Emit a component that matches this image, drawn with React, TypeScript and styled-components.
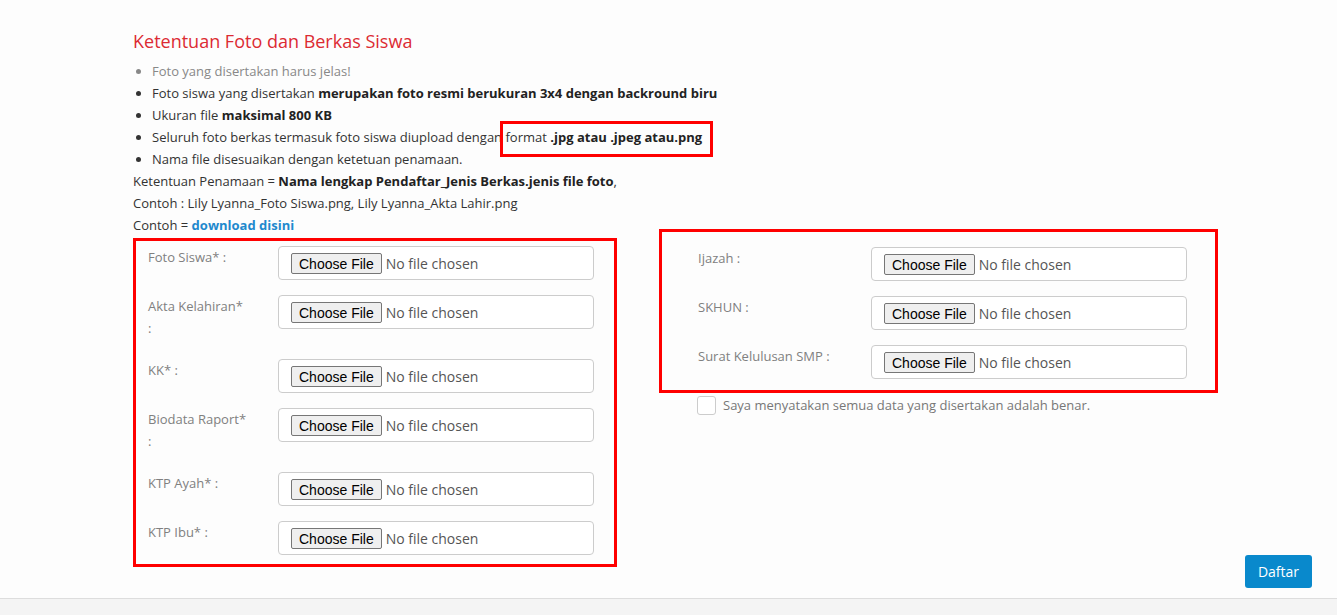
import React from "react";
import styled, { createGlobalStyle } from "styled-components";

const Global = createGlobalStyle`
  html, body { margin: 0; padding: 0; background: #fdfdfd; }
  body { font-family: "Open Sans", "Noto Sans", sans-serif; font-size: 13px; color: #333; }
  * { box-sizing: border-box; }
`;

const Page = styled.div`
  min-height: 598px;
  padding: 30px 25px 10px 133px;
`;

const Title = styled.h3`
  margin: 0 0 8px;
  font-size: 18px;
  font-weight: 400;
  line-height: 22px;
  color: #dc2b33;
`;

const List = styled.ul`
  margin: 0;
  padding-left: 19px;
  line-height: 22px;
`;

const Item = styled.li<{ $muted?: boolean }>`
  color: ${(p) => (p.$muted ? "#888" : "#333")};
  b { color: #222; font-weight: 700; }
`;

const Line = styled.p`
  margin: 0;
  line-height: 22px;
  b { color: #222; font-weight: 700; }
`;

const Link = styled.a`
  color: #1f89cd;
  font-weight: 700;
  text-decoration: none;
`;

const Marked = styled.span`
  position: relative;
  display: inline-block;
  &::after {
    content: "";
    position: absolute;
    left: -5px;
    right: -11px;
    top: -5px;
    bottom: -9px;
    border: 3px solid #ff0000;
  }
`;

const Columns = styled.div`
  display: flex;
  align-items: flex-start;
  gap: 42px;
  margin-top: -7px;
`;

const AnnotBox = styled.div<{ $w: number; $pad: string }>`
  width: ${(p) => p.$w}px;
  border: 3px solid #ff0000;
  padding: ${(p) => p.$pad};
`;

const LeftCol = styled.div`
  margin-top: 9px;
`;

const RightCol = styled.div`
  display: flex;
  flex-direction: column;
  width: 653px;
`;

const Group = styled.div<{ $label: number }>`
  display: grid;
  grid-template-columns: ${(p) => p.$label}px 316px;
  align-items: start;
  column-gap: 30px;
  margin-bottom: 15px;
  &:last-child { margin-bottom: 0; }
`;

const Label = styled.label`
  display: block;
  margin-bottom: 5px;
  line-height: 22px;
  color: #808080;
  font-size: 13px;
`;

const FileInput = styled.input`
  display: block;
  width: 316px;
  height: 34px;
  padding: 6px 12px;
  border: 1px solid #ccc;
  border-radius: 4px;
  background: #fff;
  font-family: "Open Sans", sans-serif;
  font-size: 14px;
  color: #555;
  line-height: 20px;
  &::file-selector-button {
    font-family: "Liberation Sans", Arial, sans-serif;
    font-size: 14px;
    color: #000;
    height: 21px;
    padding: 1px 7px;
    margin-right: 4px;
    border: 1px solid #767676;
    border-radius: 2px;
    background: #efefef;
  }
`;

const CheckRow = styled.label`
  display: flex;
  align-items: center;
  gap: 7px;
  margin: 2px 0 0 38px;
  color: #777;
  font-size: 13px;
  line-height: 20px;
`;

const Check = styled.input`
  appearance: none;
  margin: 0;
  width: 19px;
  height: 19px;
  border: 1px solid #ccc;
  border-radius: 3px;
  background: #fff;
`;

const Submit = styled.button`
  align-self: flex-end;
  margin-top: 140px;
  width: 67px;
  height: 33px;
  border: none;
  border-radius: 3px;
  background: #0989cc;
  color: #fff;
  font-family: "Open Sans", sans-serif;
  font-size: 14px;
`;

const Footer = styled.div`
  height: 30px;
  border-top: 1px solid #ddd;
  background: #f4f4f4;
`;

type Field = { label: string };
const leftFields: Field[] = [
  { label: "Foto Siswa* :" },
  { label: "Akta Kelahiran* :" },
  { label: "KK* :" },
  { label: "Biodata Raport* :" },
  { label: "KTP Ayah* :" },
  { label: "KTP Ibu* :" },
];
const rightFields: Field[] = [
  { label: "Ijazah :" },
  { label: "SKHUN :" },
  { label: "Surat Kelulusan SMP :" },
];

export default function App() {
  return (
    <>
      <Global />
      <Page>
        <Title>Ketentuan Foto dan Berkas Siswa</Title>
        <List>
          <Item $muted>Foto yang disertakan harus jelas!</Item>
          <Item>
            Foto siswa yang disertakan <b>merupakan foto resmi berukuran 3x4 dengan backround biru</b>
          </Item>
          <Item>
            Ukuran file <b>maksimal 800 KB</b>
          </Item>
          <Item>
            Seluruh foto berkas termasuk foto siswa diupload dengan{" "}
            <Marked>
              format <b>.jpg atau .jpeg atau.png</b>
            </Marked>
          </Item>
          <Item>Nama file disesuaikan dengan ketetuan penamaan.</Item>
        </List>
        <Line>
          Ketentuan Penamaan = <b>Nama lengkap Pendaftar_Jenis Berkas.jenis file foto</b>,
        </Line>
        <Line>Contoh : Lily Lyanna_Foto Siswa.png, Lily Lyanna_Akta Lahir.png</Line>
        <Line>
          Contoh = <Link href="#">download disini</Link>
        </Line>
        <Columns>
          <LeftCol>
            <AnnotBox $w={484} $pad="5px 0 9px 12px">
              {leftFields.map((f) => (
                <Group key={f.label} $label={100}>
                  <Label>{f.label}</Label>
                  <div>
                    <FileInput type="file" />
                  </div>
                </Group>
              ))}
            </AnnotBox>
          </LeftCol>
          <RightCol>
            <AnnotBox $w={559} $pad="15px 0 11px 36px">
              {rightFields.map((f) => (
                <Group key={f.label} $label={143}>
                  <Label>{f.label}</Label>
                  <div>
                    <FileInput type="file" />
                  </div>
                </Group>
              ))}
            </AnnotBox>
            <CheckRow>
              <Check type="checkbox" />
              Saya menyatakan semua data yang disertakan adalah benar.
            </CheckRow>
            <Submit type="button">Daftar</Submit>
          </RightCol>
        </Columns>
      </Page>
      <Footer />
    </>
  );
}
